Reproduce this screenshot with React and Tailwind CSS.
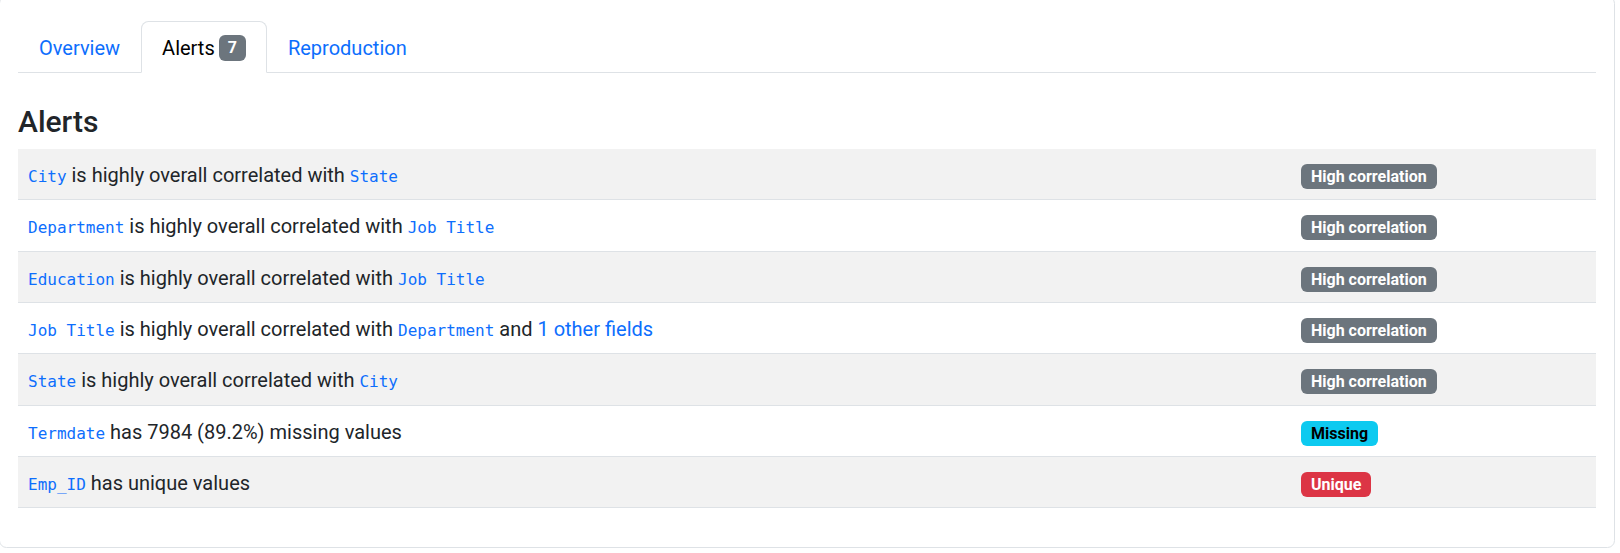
const FONT = { fontFamily: 'Roboto, "Noto Sans", sans-serif' }

// Lignes d'alertes : champ(s) en code, texte libre, badge
const alertes = [
  { parts: [['code', 'City'], ['t', ' is highly overall correlated with '], ['code', 'State']], badge: 'corr' },
  { parts: [['code', 'Department'], ['t', ' is highly overall correlated with '], ['code', 'Job Title']], badge: 'corr' },
  { parts: [['code', 'Education'], ['t', ' is highly overall correlated with '], ['code', 'Job Title']], badge: 'corr' },
  {
    parts: [
      ['code', 'Job Title'],
      ['t', ' is highly overall correlated with '],
      ['code', 'Department'],
      ['t', ' and '],
      ['link', '1 other fields'],
    ],
    badge: 'corr',
  },
  { parts: [['code', 'State'], ['t', ' is highly overall correlated with '], ['code', 'City']], badge: 'corr' },
  { parts: [['code', 'Termdate'], ['t', ' has 7984 (89.2%) missing values']], badge: 'missing' },
  { parts: [['code', 'Emp_ID'], ['t', ' has unique values']], badge: 'unique' },
]

function Badge({ kind }) {
  if (kind === 'missing')
    return (
      <span className="inline-block rounded-[6px] bg-[#0dcaf0] px-[10px] py-[5px] text-[16px] font-bold leading-[15px] text-black">
        Missing
      </span>
    )
  if (kind === 'unique')
    return (
      <span className="inline-block rounded-[6px] bg-[#dc3545] px-[10px] py-[5px] text-[16px] font-bold leading-[15px] text-white">
        Unique
      </span>
    )
  return (
    <span className="inline-block rounded-[6px] bg-[#6c757d] px-[10px] py-[5px] text-[16px] font-bold leading-[15px] text-white">
      High correlation
    </span>
  )
}

function Ligne({ alerte, index }) {
  return (
    <div
      className={`flex h-[51.33px] items-start border-b border-[#dee2e6] ${index % 2 === 0 ? 'bg-[#f2f2f2]' : 'bg-white'}`}
    >
      <div className="w-[1273px] pl-[10px] pt-[11px] text-[20px] leading-[30px] text-[#212529]">
        {alerte.parts.map(([type, texte], i) => {
          if (type === 'code')
            return (
              <code key={i} className="text-[16px] text-[#0d6efd]" style={{ fontFamily: '"DejaVu Sans Mono", monospace' }}>
                {texte}
              </code>
            )
          if (type === 'link')
            return (
              <span key={i} className="text-[#0d6efd]">
                {texte}
              </span>
            )
          return <span key={i} className="whitespace-pre">{texte}</span>
        })}
      </div>
      <div className="flex-1 pl-[10px] pt-[15px]">
        <Badge kind={alerte.badge} />
      </div>
    </div>
  )
}

export default function App() {
  return (
    <div className="h-[553px] w-[1620px] overflow-hidden bg-white" style={FONT}>
      <div className="-mt-[4px] -ml-px h-[552px] w-[1616px] rounded-[7.5px] border border-[#dee2e6] px-[18px] pt-[24px]">
        {/* Onglets */}
        <div className="flex border-b border-[#dee2e6] text-[20px] leading-[30px]">
          <div className="-mb-px border border-transparent px-[20px] pb-[9px] pt-[11px] text-[#0d6efd]">Overview</div>
          <div className="-mb-px flex items-center rounded-t-[7.5px] border border-[#dee2e6] border-b-white bg-white px-[20px] pb-[9px] pt-[11px] text-black">
            Alerts
            <span className="ml-[4px] inline-block rounded-[6px] bg-[#6c757d] px-[9px] py-[5px] text-[16px] font-bold leading-[16px] text-white">
              7
            </span>
          </div>
          <div className="-mb-px border border-transparent px-[20px] pb-[9px] pt-[11px] text-[#0d6efd]">Reproduction</div>
        </div>

        <h4 className="mb-[9px] mt-[31px] text-[30px] font-medium leading-[36px] text-[#212529]">Alerts</h4>

        <div>
          {alertes.map((a, i) => (
            <Ligne key={i} alerte={a} index={i} />
          ))}
        </div>
      </div>
    </div>
  )
}
